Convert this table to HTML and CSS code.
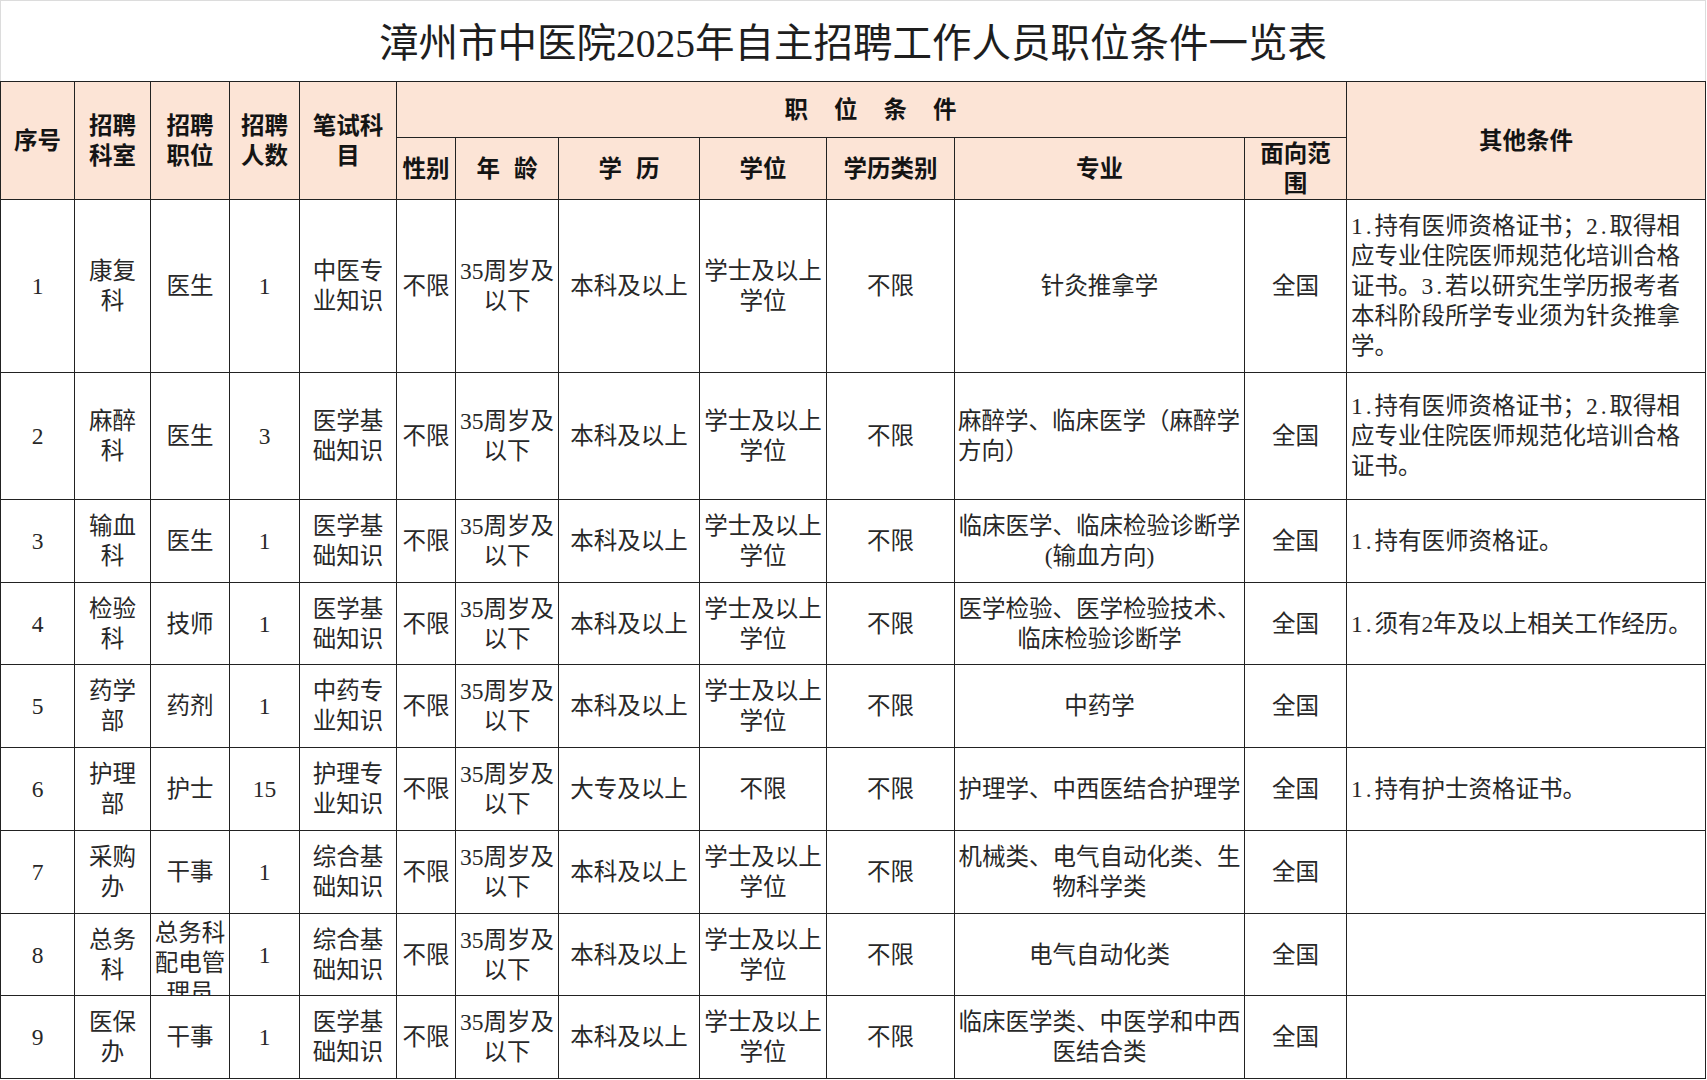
FILE: index.html
```html
<!DOCTYPE html>
<html lang="zh-CN">
<head>
<meta charset="utf-8">
<title>漳州市中医院2025年自主招聘工作人员职位条件一览表</title>
<link rel="stylesheet" href="styles.css">
</head>
<body>
<div class="sheet">
  <div class="title">漳州市中医院2025年自主招聘工作人员职位条件一览表</div>
  <div class="grid">
    <div class="c h r2"><span>序号</span></div>
    <div class="c h r2"><span>招聘<br>科室</span></div>
    <div class="c h r2"><span>招聘<br>职位</span></div>
    <div class="c h r2"><span>招聘<br>人数</span></div>
    <div class="c h r2"><span>笔试科<br>目</span></div>
    <div class="c h span7"><span class="wide">职位条件</span></div>
    <div class="c h r2"><span>其他条件</span></div>
    <div class="c h"><span>性别</span></div>
    <div class="c h"><span class="sp">年龄</span></div>
    <div class="c h"><span class="sp">学历</span></div>
    <div class="c h"><span>学位</span></div>
    <div class="c h"><span>学历类别</span></div>
    <div class="c h"><span>专业</span></div>
    <div class="c h"><span>面向范<br>围</span></div>

    <div class="c"><span>1</span></div>
    <div class="c"><span>康复<br>科</span></div>
    <div class="c"><span>医生</span></div>
    <div class="c"><span>1</span></div>
    <div class="c"><span>中医专<br>业知识</span></div>
    <div class="c"><span>不限</span></div>
    <div class="c"><span>35周岁及<br>以下</span></div>
    <div class="c"><span>本科及以上</span></div>
    <div class="c"><span>学士及以上<br>学位</span></div>
    <div class="c"><span>不限</span></div>
    <div class="c"><span>针灸推拿学</span></div>
    <div class="c"><span>全国</span></div>
    <div class="c l o"><span><span class="n">1.</span>持有医师资格证书；<span class="n">2.</span>取得相<br>应专业住院医师规范化培训合格<br>证书。<span class="n">3.</span>若以研究生学历报考者<br>本科阶段所学专业须为针灸推拿<br>学。</span></div>

    <div class="c"><span>2</span></div>
    <div class="c"><span>麻醉<br>科</span></div>
    <div class="c"><span>医生</span></div>
    <div class="c"><span>3</span></div>
    <div class="c"><span>医学基<br>础知识</span></div>
    <div class="c"><span>不限</span></div>
    <div class="c"><span>35周岁及<br>以下</span></div>
    <div class="c"><span>本科及以上</span></div>
    <div class="c"><span>学士及以上<br>学位</span></div>
    <div class="c"><span>不限</span></div>
    <div class="c l"><span>麻醉学、临床医学（麻醉学<br>方向）</span></div>
    <div class="c"><span>全国</span></div>
    <div class="c l o"><span><span class="n">1.</span>持有医师资格证书；<span class="n">2.</span>取得相<br>应专业住院医师规范化培训合格<br>证书。</span></div>

    <div class="c"><span>3</span></div>
    <div class="c"><span>输血<br>科</span></div>
    <div class="c"><span>医生</span></div>
    <div class="c"><span>1</span></div>
    <div class="c"><span>医学基<br>础知识</span></div>
    <div class="c"><span>不限</span></div>
    <div class="c"><span>35周岁及<br>以下</span></div>
    <div class="c"><span>本科及以上</span></div>
    <div class="c"><span>学士及以上<br>学位</span></div>
    <div class="c"><span>不限</span></div>
    <div class="c"><span>临床医学、临床检验诊断学<br>(输血方向)</span></div>
    <div class="c"><span>全国</span></div>
    <div class="c l o"><span><span class="n">1.</span>持有医师资格证。</span></div>

    <div class="c"><span>4</span></div>
    <div class="c"><span>检验<br>科</span></div>
    <div class="c"><span>技师</span></div>
    <div class="c"><span>1</span></div>
    <div class="c"><span>医学基<br>础知识</span></div>
    <div class="c"><span>不限</span></div>
    <div class="c"><span>35周岁及<br>以下</span></div>
    <div class="c"><span>本科及以上</span></div>
    <div class="c"><span>学士及以上<br>学位</span></div>
    <div class="c"><span>不限</span></div>
    <div class="c"><span>医学检验、医学检验技术、<br>临床检验诊断学</span></div>
    <div class="c"><span>全国</span></div>
    <div class="c l o"><span><span class="n">1.</span>须有2年及以上相关工作经历。</span></div>

    <div class="c"><span>5</span></div>
    <div class="c"><span>药学<br>部</span></div>
    <div class="c"><span>药剂</span></div>
    <div class="c"><span>1</span></div>
    <div class="c"><span>中药专<br>业知识</span></div>
    <div class="c"><span>不限</span></div>
    <div class="c"><span>35周岁及<br>以下</span></div>
    <div class="c"><span>本科及以上</span></div>
    <div class="c"><span>学士及以上<br>学位</span></div>
    <div class="c"><span>不限</span></div>
    <div class="c"><span>中药学</span></div>
    <div class="c"><span>全国</span></div>
    <div class="c l o"></div>

    <div class="c"><span>6</span></div>
    <div class="c"><span>护理<br>部</span></div>
    <div class="c"><span>护士</span></div>
    <div class="c"><span>15</span></div>
    <div class="c"><span>护理专<br>业知识</span></div>
    <div class="c"><span>不限</span></div>
    <div class="c"><span>35周岁及<br>以下</span></div>
    <div class="c"><span>大专及以上</span></div>
    <div class="c"><span>不限</span></div>
    <div class="c"><span>不限</span></div>
    <div class="c"><span>护理学、中西医结合护理学</span></div>
    <div class="c"><span>全国</span></div>
    <div class="c l o"><span><span class="n">1.</span>持有护士资格证书。</span></div>

    <div class="c"><span>7</span></div>
    <div class="c"><span>采购<br>办</span></div>
    <div class="c"><span>干事</span></div>
    <div class="c"><span>1</span></div>
    <div class="c"><span>综合基<br>础知识</span></div>
    <div class="c"><span>不限</span></div>
    <div class="c"><span>35周岁及<br>以下</span></div>
    <div class="c"><span>本科及以上</span></div>
    <div class="c"><span>学士及以上<br>学位</span></div>
    <div class="c"><span>不限</span></div>
    <div class="c"><span>机械类、电气自动化类、生<br>物科学类</span></div>
    <div class="c"><span>全国</span></div>
    <div class="c l o"></div>

    <div class="c"><span>8</span></div>
    <div class="c"><span>总务<br>科</span></div>
    <div class="c top"><span>总务科<br>配电管<br>理员</span></div>
    <div class="c"><span>1</span></div>
    <div class="c"><span>综合基<br>础知识</span></div>
    <div class="c"><span>不限</span></div>
    <div class="c"><span>35周岁及<br>以下</span></div>
    <div class="c"><span>本科及以上</span></div>
    <div class="c"><span>学士及以上<br>学位</span></div>
    <div class="c"><span>不限</span></div>
    <div class="c"><span>电气自动化类</span></div>
    <div class="c"><span>全国</span></div>
    <div class="c l o"></div>

    <div class="c"><span>9</span></div>
    <div class="c"><span>医保<br>办</span></div>
    <div class="c"><span>干事</span></div>
    <div class="c"><span>1</span></div>
    <div class="c"><span>医学基<br>础知识</span></div>
    <div class="c"><span>不限</span></div>
    <div class="c"><span>35周岁及<br>以下</span></div>
    <div class="c"><span>本科及以上</span></div>
    <div class="c"><span>学士及以上<br>学位</span></div>
    <div class="c"><span>不限</span></div>
    <div class="c"><span>临床医学类、中医学和中西<br>医结合类</span></div>
    <div class="c"><span>全国</span></div>
    <div class="c l o"></div>
  </div>
</div>
</body>
</html>
```

FILE: styles.css
```css
html, body {
  margin: 0;
  padding: 0;
  background: #ffffff;
}

body {
  font-family: "Liberation Serif", "Noto Sans CJK SC", serif;
  color: #222222;
}

.sheet {
  width: 1706px;
}

.title {
  box-sizing: border-box;
  height: 81px;
  border: 1px solid #dcdcdc;
  border-bottom: none;
  padding-top: 7px;
  font-size: 39.5px;
  line-height: 72px;
  text-align: center;
  color: #1e1e1e;
  white-space: nowrap;
}

.grid {
  box-sizing: border-box;
  width: 1706px;
  display: grid;
  grid-template-columns: 74px 76px 79px 70px 97px 59px 103px 141px 127px 128px 290px 102px 359px;
  grid-template-rows: 56px 62px 173px 127px 83px 82px 83px 83px 83px 82px 83px;
  border-top: 1px solid #222222;
  border-left: 1px solid #222222;
}

.c {
  box-sizing: border-box;
  border-right: 1px solid #222222;
  border-bottom: 1px solid #222222;
  display: flex;
  align-items: center;
  justify-content: center;
  text-align: center;
  overflow: hidden;
  padding: 0 3px;
  font-size: 23.5px;
  line-height: 30px;
  color: #282828;
  white-space: nowrap;
}

.h {
  background: #fce4d6;
  font-weight: 700;
  color: #141414;
}

.r2 {
  grid-row: span 2;
}

.span7 {
  grid-column: span 7;
  padding-left: 27px;
}

.wide {
  letter-spacing: 26px;
}

.sp {
  letter-spacing: 14px;
  margin-right: -14px;
}

.l {
  justify-content: flex-start;
  text-align: left;
}

.o {
  padding-left: 4px;
}

.n {
  letter-spacing: 0.125em;
}

.top {
  align-items: flex-start;
  padding-top: 4px;
}
```
